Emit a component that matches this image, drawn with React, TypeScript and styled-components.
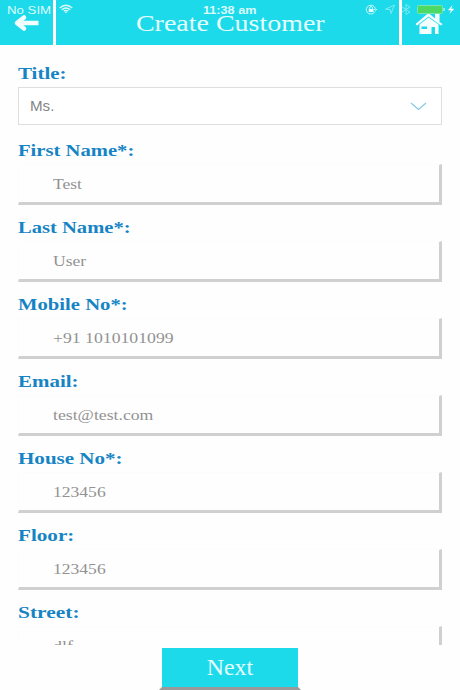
import React from "react";
import styled, { createGlobalStyle } from "styled-components";

const GlobalStyle = createGlobalStyle`
  * { box-sizing: border-box; }
  body { margin: 0; background: #fefefe; }
`;

const serif = `"Liberation Serif", "Times New Roman", serif`;
const sans = `"Liberation Sans", Arial, sans-serif`;
const cyan = "#1cdaea";

const Screen = styled.div`
  position: relative;
  display: flex;
  flex-direction: column;
  width: 460px;
  height: 690px;
  overflow: hidden;
  background: #fefefe;
`;

const Wide = styled.span<{ $x: number; $center?: boolean }>`
  display: inline-block;
  white-space: nowrap;
  transform: scaleX(${(p) => p.$x});
  transform-origin: ${(p) => (p.$center ? "center" : "left")};
`;

const Header = styled.header`
  display: grid;
  grid-template-columns: 53px 1fr 58px;
  grid-template-rows: 45px;
  column-gap: 3px;
  flex: none;
  height: 45px;
  background: #fff;
`;

const HeaderCell = styled.div`
  background: ${cyan};
  overflow: hidden;
  svg { display: block; }
`;

const HeaderTitle = styled.h1`
  margin: 0;
  padding-left: 5px;
  background: ${cyan};
  color: #e6fdfe;
  font: 400 23.5px/46px ${serif};
  text-align: center;
`;

const StatusBar = styled.div`
  position: absolute;
  inset: 0 0 auto 0;
  display: grid;
  grid-template-columns: 59px 144px 162px 1fr;
  height: 20px;
  color: #dcfbfd;
  font: 11.5px/20px ${sans};
  svg { display: block; }
`;

const Carrier = styled.span`
  padding-left: 7px;
`;

const Clock = styled.span`
  font-weight: 700;
`;

const Form = styled.main`
  flex: none;
  height: 600px;
  padding: 14px 18px 0;
  overflow: hidden;
`;

const Field = styled.div`
  height: 77px;
`;

const Label = styled.label`
  display: block;
  height: 28px;
  color: #1684c4;
  font: 700 16.5px/29px ${serif};
`;

const Select = styled.div`
  display: flex;
  align-items: center;
  justify-content: space-between;
  height: 38px;
  padding: 0 14px 0 11px;
  border: 1px solid #dedede;
  background: #fff;
  color: #858585;
  font: 14px/36px ${sans};
`;

const Input = styled.div`
  height: 41px;
  padding-left: 34px;
  border: solid;
  border-width: 1px 3px 3px 1px;
  border-color: #fcfcfc #d0d0d0 #d0d0d0 #fcfcfc;
  background: #fefefe;
  color: #929292;
  font: 15px/39px ${serif};
`;

const NextButton = styled.button`
  align-self: center;
  flex: none;
  width: 142px;
  height: 44px;
  margin-top: 1px;
  padding: 0;
  border: solid;
  border-width: 2px 3px 3px 3px;
  border-color: #fefefe #fefefe #999 #fefefe;
  background: ${cyan};
  background-clip: padding-box;
  color: #e6fdfe;
  font: 400 22.5px/39px ${serif};
`;

const fields = [
  { label: "First Name*:", value: "Test", lx: 1.25, vx: 1.17 },
  { label: "Last Name*:", value: "User", lx: 1.247, vx: 1.17 },
  { label: "Mobile No*:", value: "+91 1010101099", lx: 1.253, vx: 1.18 },
  { label: "Email:", value: "test@test.com", lx: 1.27, vx: 1.18 },
  { label: "House No*:", value: "123456", lx: 1.275, vx: 1.17 },
  { label: "Floor:", value: "123456", lx: 1.28, vx: 1.17 },
  { label: "Street:", value: "dlf", lx: 1.3, vx: 1.2 },
];

const BackIcon = () => (
  <svg width="53" height="45" fill="none" stroke="#f2feff" strokeLinecap="round" strokeLinejoin="round">
    <path d="M18 23H38.5" strokeWidth="4.5" strokeLinecap="butt" />
    <path d="M24 17.5L17 23L24 28.5" strokeWidth="4.5" />
  </svg>
);

const HomeIcon = () => (
  <svg width="58" height="45" fill="#f5feff">
    <path d="M13.5 24L26.5 13L33 18.5V13H37.5V22L40.5 24L39 25.5L26.5 16.5L15 25.5Z" />
    <path fillRule="evenodd" d="M17.5 24.5L26.5 17.5L36.5 24.5V34H33V27H29.5V34H17.5ZM19.5 26.5V29H25V26.5Z" />
  </svg>
);

const WifiIcon = () => (
  <svg width="15" height="20" fill="none" stroke="#dcfbfd" strokeWidth="1.4">
    <path d="M.7 8Q7 2.6 13.3 8M2.8 9.7Q7 6.3 11.2 9.7M4.8 11.3Q7 9.5 9.2 11.3" />
    <path d="M5.7 12Q7 11 8.3 12L7 13.3Z" fill="#dcfbfd" stroke="none" />
  </svg>
);

const StatusIcons = () => (
  <svg width="95" height="20" fill="none" stroke="#c5f7fa">
    <path d="M9.5 7A4.6 4.4 0 1 0 10 11.5" />
    <path d="M9.5 7A4.6 4.4 0 0 1 10.6 9.5M9 9L10.6 10.5L12 9" />
    <path d="M4.7 9V8A1.4 1.4 0 0 1 7.5 8V9" />
    <path d="M3.7 9H8.5V12H3.7Z" fill="#e4fcfd" stroke="none" />
    <path d="M20.5 9.2L29.5 5L26 13.5L25.2 9.6Z" stroke="#7eeaf3" />
    <path d="M37 7L45 12L41 14.5V4.5L45 7L37 12" stroke="#83ebf3" strokeWidth=".9" />
    <rect x="52.5" y="5.5" width="25" height="8" rx="1" fill="#4cd964" stroke="#7be5b0" />
    <path d="M78.5 8H79.5V11H78.5Z" fill="#dcfbfd" stroke="none" />
    <path d="M87.5 5L83 10.2H86L84.5 14L89.2 8.8H86.2Z" fill="#fff" stroke="none" />
  </svg>
);

const ChevronIcon = () => (
  <svg width="17" height="9" fill="none" stroke="#87c9e6" strokeWidth="1.3">
    <path d="M1 1L8.5 7.5L16 1" />
  </svg>
);

export default function App() {
  return (
    <>
      <GlobalStyle />
      <Screen>
        <Header>
          <HeaderCell><BackIcon /></HeaderCell>
          <HeaderTitle><Wide $x={1.19} $center>Create Customer</Wide></HeaderTitle>
          <HeaderCell><HomeIcon /></HeaderCell>
        </Header>
        <StatusBar>
          <Carrier><Wide $x={1.15}>No SIM</Wide></Carrier>
          <WifiIcon />
          <Clock><Wide $x={1.1}>11:38 am</Wide></Clock>
          <StatusIcons />
        </StatusBar>
        <Form>
          <Field>
            <Label><Wide $x={1.27}>Title:</Wide></Label>
            <Select><Wide $x={1.08}>Ms.</Wide><ChevronIcon /></Select>
          </Field>
          {fields.map((f) => (
            <Field key={f.label}>
              <Label><Wide $x={f.lx}>{f.label}</Wide></Label>
              <Input><Wide $x={f.vx}>{f.value}</Wide></Input>
            </Field>
          ))}
        </Form>
        <NextButton><Wide $x={1.06} $center>Next</Wide></NextButton>
      </Screen>
    </>
  );
}
